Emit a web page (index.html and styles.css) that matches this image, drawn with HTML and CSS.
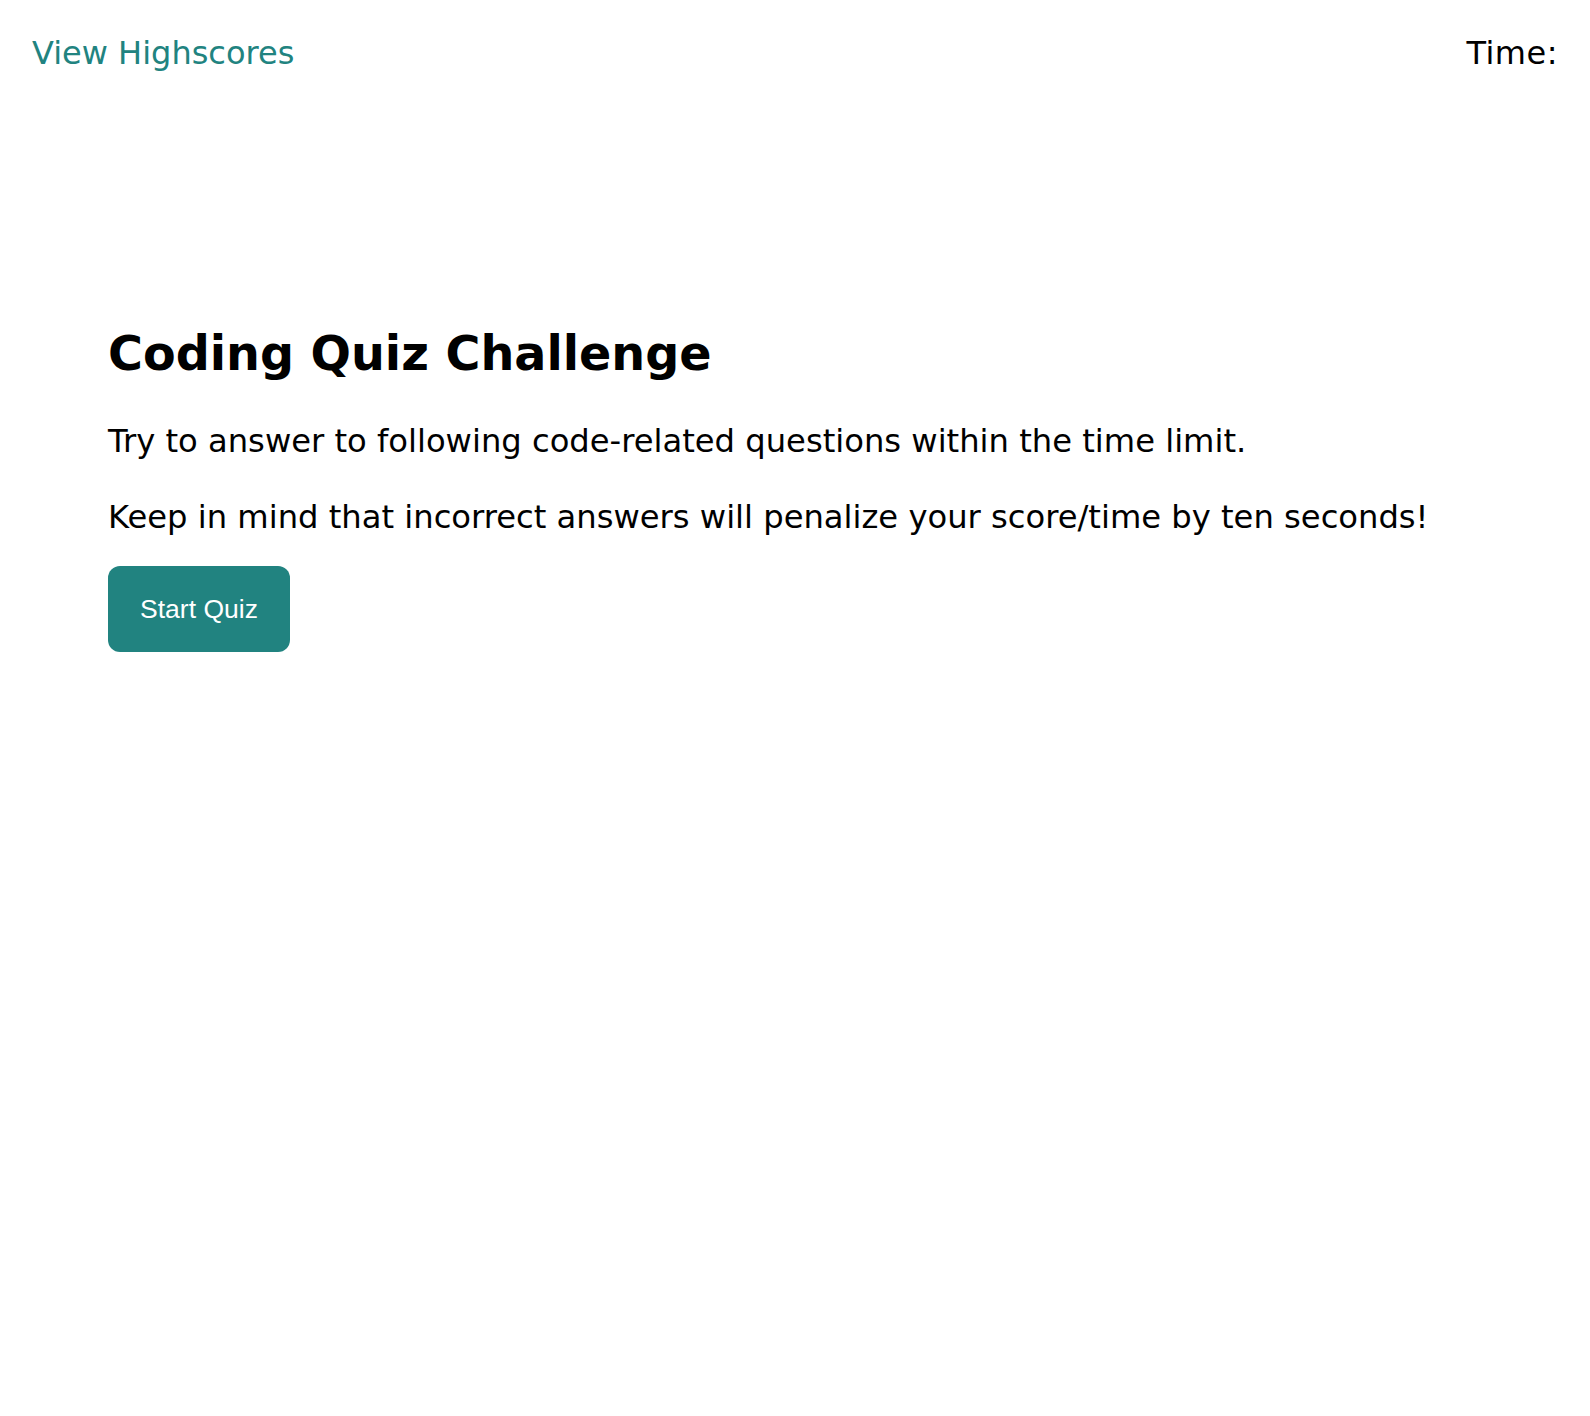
FILE: index.html
```html
<!DOCTYPE html>
<html lang="en">
<head>
<meta charset="utf-8">
<title>Coding Quiz Challenge</title>
<link rel="stylesheet" href="styles.css">
</head>
<body>
<header class="top-bar">
  <a class="highscores-link" href="#">View Highscores</a>
  <div class="timer">Time: <span class="timer-value"></span></div>
</header>
<main class="intro">
  <h1 class="intro-title">Coding Quiz Challenge</h1>
  <p class="intro-text">Try to answer to following code-related questions within the time limit.</p>
  <p class="intro-text">Keep in mind that incorrect answers will penalize your score/time by ten seconds!</p>
  <button class="start-button" type="button">Start Quiz</button>
</main>
</body>
</html>
```
FILE: styles.css
```css
html, body {
  margin: 0;
  padding: 0;
  background: #ffffff;
}
body {
  font-family: "DejaVu Sans", Verdana, sans-serif;
  color: #000000;
}
.top-bar {
  display: flex;
  justify-content: space-between;
  align-items: center;
  padding: 35px 32px 0 32px;
  font-size: 32px;
  line-height: 37px;
}
.highscores-link {
  color: #218380;
  text-decoration: none;
}
.timer {
  color: #000000;
  letter-spacing: 0.5px;
}
.intro {
  padding: 254px 108px 0 108px;
}
.intro-title {
  margin: 0 0 41px 0;
  font-size: 47.6px;
  line-height: 56px;
  font-weight: bold;
}
.intro-text {
  margin: 0 0 39px 0;
  font-size: 32.2px;
  line-height: 37px;
}
.intro-text:last-of-type {
  margin-bottom: 30px;
}
.start-button {
  display: block;
  font-family: "Liberation Sans", Arial, sans-serif;
  font-size: 26.5px;
  color: #ffffff;
  background: #218380;
  border: none;
  border-radius: 12px;
  width: 182px;
  height: 86px;
  padding: 0;
  cursor: pointer;
}
```
